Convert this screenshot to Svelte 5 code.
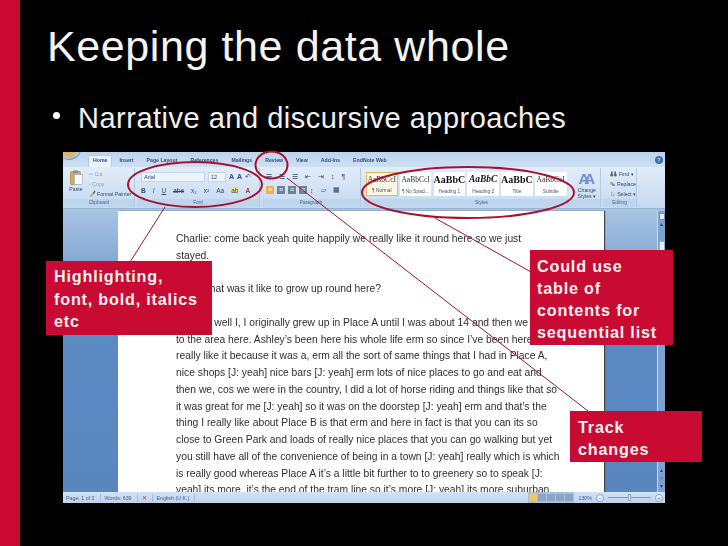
<script>
  const tabs = ['Home', 'Insert', 'Page Layout', 'References', 'Mailings', 'Review', 'View', 'Add-Ins', 'EndNote Web'];

  const styles = [
    { sample: 'AaBbCcI', label: '¶ Normal', cls: 'active' },
    { sample: 'AaBbCcI', label: '¶ No Spaci...', cls: '' },
    { sample: 'AaBbC', label: 'Heading 1', cls: 'big' },
    { sample: 'AaBbC', label: 'Heading 2', cls: 'big em' },
    { sample: 'AaBbC', label: 'Title', cls: 'big' },
    { sample: 'AaBbCcI', label: 'Subtitle', cls: '' }
  ];

  const lines = [
    'Charlie: come back yeah quite happily we really like it round here so we just',
    'stayed.',
    '',
    'J: So what was it like to grow up round here?',
    '',
    'Charlie: well I, I originally grew up in Place A until I was about 14 and then we moved',
    'to the area here.  Ashley’s been here his whole life erm so since I’ve been here I’ve',
    'really like it because it was a, erm all the sort of same things that I had in Place A,',
    'nice shops [J: yeah] nice bars [J: yeah] erm lots of nice places to go and eat and',
    'then we, cos we were in the country, I did a lot of horse riding and things like that so',
    'it was great for me [J: yeah] so it was on the doorstep [J: yeah] erm and that’s the',
    'thing I really like about Place B is that erm and here in fact is that you can its so',
    'close to Green Park and loads of really nice places that you can go walking but yet',
    'you still have all of the convenience of being in a town [J: yeah] really which is which',
    'is really good whereas Place A it’s a little bit further to to greenery so to speak [J:',
    'yeah] its more, it’s the end of the tram line so it’s more [J: yeah] its more suburban'
  ];
</script>

<div class="slide">
  <div class="stripe"></div>
  <main class="content">
    <h1>Keeping the data whole</h1>
    <div class="bullet"><span class="dot"></span>Narrative and discursive approaches</div>

    <div class="word">
      <div class="tabs">
        <span class="office"></span>
        {#each tabs as tab, i}
          <span class="tab" class:on={i === 0}>{tab}</span>
        {/each}
        <span class="help">?</span>
      </div>

      <div class="ribbon">
        <section class="group clip">
          <div class="body clip-body">
            <div class="paste">
              <svg width="13" height="15" viewBox="0 0 13 15" aria-hidden="true">
                <rect x="0.5" y="1.5" width="10" height="13" rx="1" fill="#d9a94f" stroke="#a87f38" stroke-width="0.6" />
                <rect x="3" y="0.5" width="5" height="2.5" fill="#8e8e8e" />
                <rect x="4.5" y="4.5" width="8" height="10" fill="#f6f8fc" stroke="#9aa9bd" stroke-width="0.6" />
              </svg>
              <span>Paste</span>
            </div>
            <div class="clip-list">
              <span class="dim">✂ Cut</span>
              <span class="dim">▫ Copy</span>
              <span class="painter">
                <svg width="7" height="7" viewBox="0 0 7 7" aria-hidden="true">
                  <path d="M0.5 6.5 L3 3.5 L4.5 5 L2 6.8 Z" fill="#e0a52f" />
                  <path d="M3.4 3.2 L5.6 0.6 L6.6 1.4 L4.8 4.4 Z" fill="#5a6f8f" />
                </svg>
                Format Painter
              </span>
            </div>
          </div>
          <footer>Clipboard</footer>
        </section>

        <section class="group font">
          <div class="body font-body">
            <div class="row">
              <span class="field wide">Arial</span>
              <span class="field small">12</span>
              <b class="tool">A</b><b class="tool">A</b><span class="tool">↶</span>
            </div>
            <div class="row tools">
              <b>B</b><i>I</i><u>U</u><s>abe</s><span>x₂</span><span>x²</span><span>Aa</span>
              <span class="mark">ab</span><span class="red">A</span>
            </div>
          </div>
          <footer>Font</footer>
        </section>

        <section class="group para">
          <div class="body font-body">
            <div class="row tools dark">
              <span>☰</span><span>☰</span><span>☰</span><span>⇤</span><span>⇥</span><span>↕</span><span>¶</span>
            </div>
            <div class="row tools dark">
              <span class="align on">≡</span><span class="align">≡</span><span class="align">≡</span><span class="align">≡</span>
              <span>↕</span><span>▱</span><span>▦</span>
            </div>
          </div>
          <footer>Paragraph</footer>
        </section>

        <section class="group stylesgrp">
          <div class="body gallery">
            {#each styles as s}
              <div class="style {s.cls}">
                <span class="sample">{s.sample}</span>
                <span class="style-label">{s.label}</span>
              </div>
            {/each}
            <span class="gutter"></span>
            <div class="change">
              <span class="aa">AA</span>
              <span>Change<br />Styles ▾</span>
            </div>
          </div>
          <footer>Styles</footer>
        </section>

        <section class="group editing">
          <div class="body clip-list edit-list">
            <span class="edit-item">
              <svg width="7" height="6" viewBox="0 0 7 6" aria-hidden="true">
                <circle cx="1.7" cy="4" r="1.5" fill="#51688a" />
                <circle cx="5.3" cy="4" r="1.5" fill="#51688a" />
                <rect x="1" y="0.5" width="1.6" height="3" fill="#51688a" />
                <rect x="4.4" y="0.5" width="1.6" height="3" fill="#51688a" />
              </svg>
              Find ▾
            </span>
            <span class="edit-item">
              <svg width="7" height="6" viewBox="0 0 7 6" aria-hidden="true">
                <rect x="0.3" y="0.3" width="4" height="3.4" fill="#8fb08c" />
                <rect x="2.8" y="2.6" width="4" height="3.2" fill="#7d93b3" />
              </svg>
              Replace
            </span>
            <span class="edit-item">
              <svg width="7" height="6" viewBox="0 0 7 6" aria-hidden="true">
                <path d="M2 0.3 L2 5.6 L3.4 4.3 L4.5 5.8 L5.2 5.3 L4.2 3.9 L5.8 3.7 Z" fill="#f4f7fb" stroke="#51688a" stroke-width="0.5" />
              </svg>
              Select ▾
            </span>
          </div>
          <footer>Editing</footer>
        </section>
      </div>

      <div class="workspace">
        <div class="page">
          {#each lines as line}
            <p>{line || '\u00a0'}</p>
          {/each}
        </div>
        <div class="scroll">
          <span class="ruler"></span>
          <span class="arrow-up">▴</span>
          <span class="thumb"></span>
          <span class="arrows">▴<br />○<br />▾</span>
        </div>
      </div>

      <div class="status">
        <span class="cell">Page: 1 of 2</span>
        <span class="cell">Words: 639</span>
        <span class="cell spell">✕</span>
        <span class="cell">English (U.K.)</span>
        <span class="status-right">
          <span class="views"><i class="view on"></i><i class="view"></i><i class="view"></i><i class="view"></i><i class="view"></i></span>
          <span class="zoom">130%</span>
          <span class="knob">−</span>
          <span class="slider"><i></i></span>
          <span class="knob">+</span>
        </span>
      </div>
    </div>

    <svg class="marks" viewBox="0 0 708 546" aria-hidden="true">
      <g fill="none" stroke="#a5122f" stroke-width="2">
        <ellipse cx="175" cy="184.5" rx="67" ry="22.5" />
        <ellipse cx="251.5" cy="165" rx="16" ry="13.5" />
        <ellipse cx="448" cy="192.5" rx="106" ry="25.5" />
      </g>
      <g stroke="#a5122f" stroke-width="1">
        <line x1="145" y1="207" x2="110" y2="262" />
        <line x1="267" y1="178" x2="568" y2="411" />
        <line x1="415" y1="218" x2="511" y2="272" />
      </g>
    </svg>

    <div class="callout c1">Highlighting,<br />font, bold, italics<br />etc</div>
    <div class="callout c2">Could use<br />table of<br />contents for<br />sequential list</div>
    <div class="callout c3">Track<br />changes</div>
  </main>
</div>

<style>
  :global(body) {
    margin: 0;
    background: #000;
  }

  .slide {
    width: 728px;
    height: 546px;
    display: flex;
    background: #000;
    overflow: hidden;
    font-family: "Liberation Sans", Arial, sans-serif;
  }

  .stripe {
    width: 20px;
    background: #cb0a33;
    flex: none;
  }

  .content {
    position: relative;
    flex: 1;
    min-width: 0;
    color: #fff;
  }

  h1 {
    margin: 0;
    padding: 22px 0 0 27px;
    font-size: 43px;
    line-height: 48px;
    font-weight: 400;
    letter-spacing: 0.6px;
    color: #f4f4f4;
  }

  .bullet {
    display: flex;
    align-items: center;
    margin: 32px 0 0 33px;
    font-size: 29px;
    line-height: 32px;
    letter-spacing: 0.5px;
    color: #f0f0f0;
  }

  .dot {
    width: 7px;
    height: 7px;
    border-radius: 50%;
    background: #fff;
    margin: 0 18px 5px 0;
  }

  .word {
    width: 602px;
    height: 351px;
    margin: 18px 0 0 43px;
    display: flex;
    flex-direction: column;
    color: #333;
    overflow: hidden;
    background: #5d88bd;
    filter: blur(0.35px);
  }

  .tabs {
    height: 15px;
    flex: none;
    display: flex;
    align-items: flex-end;
    background: linear-gradient(#bdd3eb, #cfe0f4);
    font-size: 5.2px;
    color: #2f4f7c;
    position: relative;
    padding-left: 25px;
  }

  .office {
    position: absolute;
    left: -6px;
    top: -14px;
    width: 22px;
    height: 20px;
    border-radius: 50%;
    background: radial-gradient(circle at 50% 60%, #d9b25c 0 25%, #b5cce6 55%);
    border: 1px solid #8097b1;
  }

  .tab {
    padding: 0 4px 2px;
    line-height: 9px;
    white-space: nowrap;
    margin-right: 5px;
    font-weight: 700;
  }

  .tab.on {
    background: #eaf3fc;
    border: 1px solid #b4cbe4;
    border-bottom: 0;
    border-radius: 2px 2px 0 0;
    margin-right: 3px;
  }

  .help {
    margin-left: auto;
    margin-right: 2px;
    margin-bottom: 3px;
    width: 8px;
    height: 8px;
    line-height: 8px;
    text-align: center;
    border-radius: 50%;
    background: #3f6fae;
    color: #fff;
  }

  .ribbon {
    height: 42px;
    flex: none;
    display: flex;
    gap: 2px;
    padding: 1px 0 1px 1px;
    box-sizing: border-box;
    background: linear-gradient(#e2edfa, #c4d9f0);
    border-bottom: 1px solid #9ab5d4;
    font-size: 5.6px;
    color: #2c4a73;
  }

  .group {
    display: flex;
    flex-direction: column;
    border-right: 1px solid #b3cae4;
    box-sizing: border-box;
  }

  .group footer {
    height: 8px;
    line-height: 8px;
    text-align: center;
    font-size: 4.8px;
    background: #bfd4ed;
    color: #47668f;
  }

  .body {
    flex: 1;
    min-height: 0;
  }

  .clip { width: 71px; }
  .font { width: 123px; }
  .para { width: 99px; }
  .stylesgrp { width: 238px; }
  .editing { width: 34px; }

  .clip-body {
    display: flex;
    gap: 4px;
    padding: 2px 0 1px 3px;
    font-size: 5.2px;
  }

  .paste {
    display: flex;
    flex-direction: column;
    align-items: center;
    gap: 1px;
    width: 18px;
    flex: none;
  }

  .clip-list {
    display: flex;
    flex-direction: column;
    justify-content: space-between;
    white-space: nowrap;
    padding: 1px 0 1px;
  }

  .painter,
  .edit-item {
    display: flex;
    align-items: center;
    gap: 1px;
  }

  .dim {
    color: #8c9bb0;
  }

  .font-body {
    display: flex;
    flex-direction: column;
    justify-content: space-around;
    padding: 2px 4px;
  }

  .row {
    display: flex;
    align-items: center;
    gap: 3px;
    height: 11px;
  }

  .tools {
    gap: 7px;
    font-size: 6.5px;
    white-space: nowrap;
  }

  .dark {
    color: #31455f;
    font-size: 7px;
  }

  .field {
    background: #edf4fc;
    border: 1px solid #c2d5ea;
    height: 8px;
    line-height: 8px;
    padding-left: 2px;
  }

  .wide { width: 60px; }
  .small { width: 14px; }
  .tool { font-size: 7px; }
  .mark { background: #f2e46a; }
  .red { color: #c8272c; font-weight: 700; }

  .align {
    width: 8px;
    height: 8px;
    line-height: 8px;
    text-align: center;
    background: #6f8098;
    color: #fff;
    margin-right: -4px;
  }

  .align.on {
    background: #f0b04c;
  }

  .gallery {
    display: flex;
    gap: 2.2px;
    padding: 4px 0 0 3px;
  }

  .style {
    width: 31.6px;
    height: 24px;
    background: #fff;
    display: flex;
    flex-direction: column;
    align-items: center;
    justify-content: space-around;
    overflow: hidden;
    box-sizing: border-box;
    white-space: nowrap;
    flex: none;
  }

  .style.active {
    background: #fff7e4;
    border: 1px solid #e5b658;
  }

  .sample {
    font-family: "Liberation Serif", serif;
    font-size: 7.5px;
    line-height: 11px;
    color: #333;
  }

  .big .sample {
    font-size: 10px;
    font-weight: 700;
    color: #111;
  }

  .em .sample {
    font-style: italic;
    font-size: 9.5px;
  }

  .style-label {
    font-size: 4.8px;
    line-height: 7px;
    color: #3c5678;
  }

  .gutter {
    width: 5px;
    flex: none;
    background: #dfeaf7;
  }

  .change {
    width: 22px;
    flex: none;
    text-align: center;
    line-height: 6px;
    display: flex;
    flex-direction: column;
    align-items: center;
    gap: 1px;
    font-size: 5.2px;
  }

  .aa {
    font-size: 15px;
    line-height: 14px;
    font-weight: 700;
    letter-spacing: -5px;
    padding-right: 5px;
    color: #6f8fd2;
  }

  .edit-list {
    padding: 3px 0 2px 7px;
    font-size: 5.2px;
  }

  .edit-item {
    gap: 2px;
  }

  .workspace {
    flex: 1;
    min-height: 0;
    display: flex;
    background: linear-gradient(#a9c4e4, #5c8ac3 40%, #5a86c0);
    padding: 2px 0 0 55px;
    overflow: hidden;
  }

  .page {
    width: 486px;
    flex: none;
    box-sizing: border-box;
    background: #fff;
    padding: 20px 0 0 58px;
    box-shadow: 1px 0 1px #444;
    color: #2e2e2e;
    overflow: hidden;
  }

  .page p {
    margin: 0;
    height: 16.75px;
    line-height: 16.75px;
    font-size: 10.3px;
    white-space: nowrap;
  }

  .scroll {
    margin-left: auto;
    width: 8px;
    background: #7da2cf;
    border-left: 1px solid #c9dbef;
    display: flex;
    flex-direction: column;
    align-items: center;
    box-sizing: border-box;
    padding: 2px 0;
    font-size: 6px;
    line-height: 8px;
    color: #27466e;
  }

  .ruler {
    width: 6px;
    height: 7px;
    background: #e6eff9;
    border: 1px solid #7590b2;
    box-sizing: border-box;
  }

  .arrow-up {
    height: 8px;
  }

  .thumb {
    width: 6px;
    height: 40px;
    margin-top: 13px;
    background: #e6eff9;
    border: 1px solid #95b1d1;
    box-sizing: border-box;
  }

  .arrows {
    margin-top: auto;
    text-align: center;
  }

  .status {
    height: 11px;
    flex: none;
    display: flex;
    align-items: center;
    padding: 0 0 0 3px;
    background: linear-gradient(#d4e3f5, #bcd2ec);
    font-size: 5.3px;
    color: #3b5f90;
    white-space: nowrap;
  }

  .cell {
    padding-right: 5px;
    margin-right: 4px;
    border-right: 1px solid #a4bcd9;
    line-height: 8px;
  }

  .spell {
    color: #c8382c;
    font-size: 6px;
  }

  .status-right {
    margin-left: auto;
    display: flex;
    align-items: center;
    gap: 4px;
    height: 100%;
    padding-right: 2px;
  }

  .views {
    display: flex;
    gap: 1px;
    padding: 0 1px;
    height: 100%;
    align-items: center;
    background: #a9c1de;
  }

  .view {
    width: 8px;
    height: 7px;
    background: #8aa4c4;
  }

  .view.on {
    background: #f4c567;
  }

  .knob {
    width: 6px;
    height: 6px;
    line-height: 6px;
    text-align: center;
    border-radius: 50%;
    background: #e9f1fa;
    border: 1px solid #8ba6c7;
  }

  .slider {
    width: 43px;
    height: 1px;
    background: #7f9cc0;
    position: relative;
  }

  .slider i {
    position: absolute;
    left: 20px;
    top: -3px;
    width: 3px;
    height: 7px;
    background: #eef4fb;
    border: 1px solid #8ba6c7;
    box-sizing: border-box;
  }

  .marks {
    position: absolute;
    inset: 0;
    width: 708px;
    height: 546px;
    pointer-events: none;
  }

  .callout {
    position: absolute;
    box-sizing: border-box;
    background: #c90a32;
    color: #f7f0f0;
    font-size: 16.2px;
    line-height: 22px;
    font-weight: 700;
    letter-spacing: 0.8px;
    white-space: nowrap;
  }

  .c1 {
    left: 26px;
    top: 261px;
    width: 166px;
    height: 74px;
    padding: 4px 0 0 8px;
    line-height: 22.5px;
  }

  .c2 {
    left: 510px;
    top: 250px;
    width: 143px;
    height: 95px;
    padding: 5px 0 0 7px;
  }

  .c3 {
    left: 550px;
    top: 411px;
    width: 132px;
    height: 51px;
    padding: 5px 0 0 8px;
  }
</style>
